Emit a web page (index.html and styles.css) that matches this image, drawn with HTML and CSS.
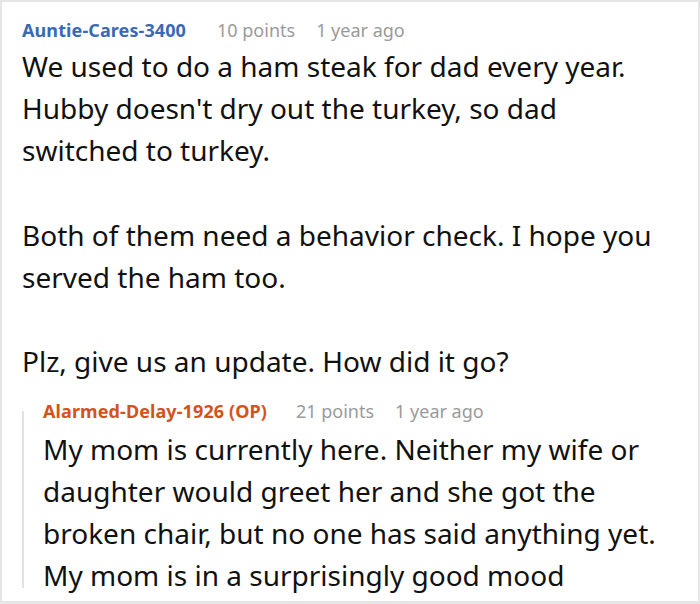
FILE: index.html
```html
<!DOCTYPE html>
<html>
<head>
<meta charset="utf-8">
<link rel="stylesheet" href="styles.css">
</head>
<body>
<div class="frame">
  <div class="comment">
    <div class="meta">
      <span class="author">Auntie-Cares-3400</span>
      <span class="points">10 points</span>
      <span class="time">1 year ago</span>
    </div>
    <div class="body">
      <p>We used to do a ham steak for dad every year. Hubby doesn't dry out the turkey, so dad switched to turkey.</p>
      <p>Both of them need a behavior check. I hope you served the ham too.</p>
      <p>Plz, give us an update. How did it go?</p>
    </div>
    <div class="reply">
      <div class="thread-line"></div>
      <div class="reply-content">
        <div class="meta">
          <span class="author op">Alarmed-Delay-1926 (OP)</span>
          <span class="points">21 points</span>
          <span class="time">1 year ago</span>
        </div>
        <div class="body">
          <p>My mom is currently here. Neither my wife or daughter would greet her and she got the broken chair, but no one has said anything yet. My mom is in a surprisingly good mood</p>
        </div>
      </div>
    </div>
  </div>
</div>
</body>
</html>
```
FILE: styles.css
```css
html, body {
  margin: 0;
  padding: 0;
  background: #fff;
}
.frame {
  width: 700px;
  height: 604px;
  box-sizing: border-box;
  border: 2px solid #e6e6e6;
  border-bottom-width: 3px;
  overflow: hidden;
  font-family: "Noto Sans", "Open Sans", sans-serif;
  color: #111;
}
.comment {
  padding: 16px 20px 0 20px;
}
.meta {
  display: flex;
  align-items: baseline;
  font-size: 18px;
  line-height: 24px;
  white-space: nowrap;
}
.author {
  font-weight: 700;
  color: #3a69b6;
  margin-right: 31px;
  letter-spacing: 0.1px;
}
.author.op {
  color: #d5521d;
  letter-spacing: 0.1px;
  margin-right: 29px;
}
.points {
  color: #9a9a9a;
  margin-right: 21px;
}
.time {
  color: #9a9a9a;
}
.body {
  margin-top: 3px;
  font-size: 28px;
  line-height: 42.2px;
}
.body p {
  margin: 0 0 42.2px 0;
}
.body p:last-child {
  margin-bottom: 0;
}
.reply {
  display: flex;
  margin-top: 16px;
}
.thread-line {
  flex: 0 0 2px;
  background: #e2e2e2;
  margin: 12px 0 8px 0;
}
.reply-content {
  flex: 1;
  min-width: 0;
  padding-left: 19px;
}
.reply-content .body {
  margin-top: 5px;
}
```
